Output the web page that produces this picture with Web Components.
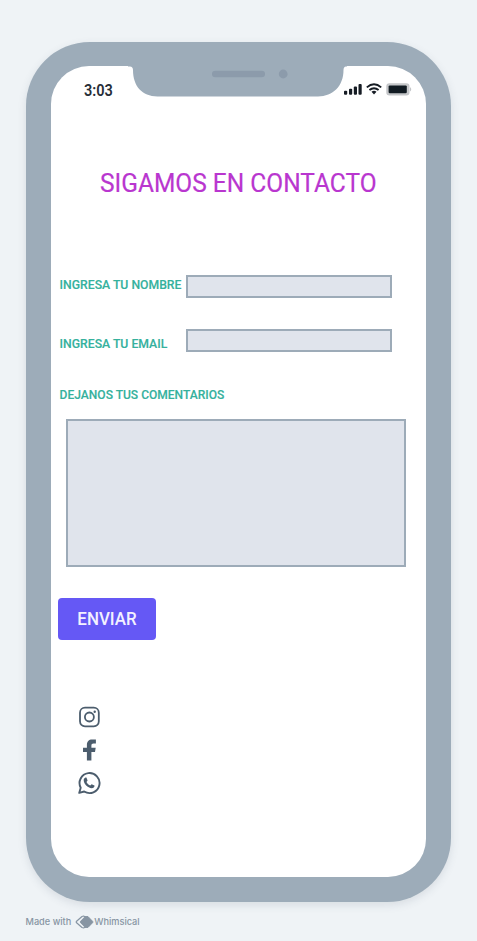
<!DOCTYPE html>
<html lang="es">
<head>
<meta charset="utf-8">
<title>Sigamos en contacto</title>
<style>
html,body{margin:0;height:100%}
body{background:#eff3f6;font-family:Roboto,"Liberation Sans",sans-serif;overflow:hidden}
</style>
</head>
<body>
<contact-board></contact-board>
<script>
const define = (name, html) => {
  const t = document.createElement('template');
  t.innerHTML = html;
  customElements.define(name, class extends HTMLElement {
    constructor() {
      super();
      this.attachShadow({mode: 'open'}).append(t.content.cloneNode(true));
    }
  });
};

define('status-bar', `
<style>
:host{display:flex;height:31px;align-items:flex-start}
.time{box-sizing:border-box;width:77px;padding:14.500px 0 0 32.500px;font-size:15px;line-height:20px;font-weight:600;color:#272e38;white-space:nowrap}
.time span{display:block;transform:scale(.97,1.04);transform-origin:0 50%}
svg{display:block;flex:none}
.icons{margin:15px 0 0 -4px}
</style>
<div class="time"><span>3:03</span></div>
<svg width="219" height="31" viewBox="0 0 219 31">
  <path fill="#9dacb9" d="M0 -1V.4H2Q4.900 .6 5 4C5 20 14 30.400 29.500 30.400H190C205 30.400 215.500 20 215.500 4Q215.600 .6 218 .4H219V-1Z"/>
  <rect x="84" y="4.700" width="53" height="6.600" rx="3.300" fill="#8c9bab"/>
  <circle cx="155.200" cy="8" r="4.400" fill="#8c9bab"/>
</svg>
<svg class="icons" width="72" height="16" viewBox="0 0 72 16">
  <g fill="#161c24">
    <rect x="1" y="9.700" width="3.200" height="4" rx="1"/>
    <rect x="6" y="7.700" width="3.200" height="6" rx="1"/>
    <rect x="10.800" y="5.400" width="3.200" height="8.300" rx="1"/>
    <rect x="15.500" y="3" width="3.200" height="10.700" rx="1"/>
  </g>
  <g fill="none" stroke="#161c24" stroke-width="1.900">
    <path d="M23.800 6.400Q31 .2 38.200 6.400"/>
    <path d="M26.400 9.100Q31 5.300 35.600 9.100"/>
  </g>
  <path d="M28.500 10.800Q31 8.800 33.500 10.800L31 13.400Z" fill="#161c24"/>
  <rect x="44" y="2.900" width="21.800" height="10.800" rx="2.500" fill="#c9cbcd" stroke="#c3c5c8" stroke-width="1.400"/>
  <path d="M67 5.900Q69.500 8.200 67 10.400Z" fill="#c3c5c8"/>
  <rect x="45.600" y="4.400" width="18.200" height="7.800" rx="1.200" fill="#111b22"/>
</svg>`);

define('page-title', `
<style>
:host{display:block;width:280px;height:32px;line-height:32px;font-size:26.400px;color:#b936cf;-webkit-text-stroke:.2px #b936cf;white-space:nowrap;transform:scaleX(.929);transform-origin:0 50%}
</style><slot></slot>`);

define('form-label', `
<style>
:host{display:block;width:126px;height:16px;line-height:16px;font-size:13px;font-weight:500;color:#35b19d;-webkit-text-stroke:.15px #35b19d;white-space:nowrap;transform:translateX(.6px) scaleX(var(--fit,.94));transform-origin:0 50%}
</style><slot></slot>`);

define('form-box', `
<style>
:host{display:block;box-sizing:border-box;flex:none;background:#e0e4ec;border:2px solid #9dabb8}
</style>`);

define('send-button', `
<style>
:host{display:block}
button{display:block;width:98px;height:42px;padding:0;border:0;border-radius:4px;background:#6558f5;color:#f3f1ff;font:500 18px/42px Roboto,"Liberation Sans",sans-serif;text-align:center}
span{display:block;transform:scaleX(.94)}
</style><button type="button"><span><slot></slot></span></button>`);

define('social-links', `
<style>
:host{display:flex;flex-direction:column;gap:9px;width:24px;color:#4c5d6d}
svg{display:block;width:24px;height:24px}
</style>
<svg viewBox="0 0 24 24" fill="none" stroke="currentColor" stroke-width="1.800">
  <rect x="3" y="2.700" width="18.800" height="18.600" rx="5"/>
  <circle cx="12.400" cy="12" r="4.500"/>
  <circle cx="17.700" cy="6.700" r="1.200" fill="currentColor" stroke="none"/>
</svg>
<svg viewBox="0 0 24 24" fill="currentColor">
  <path d="M9.900 22.500V13.900H6V9.800H9.900V7.200C9.900 3.600 11.800 1.600 15.200 1.600H18.900V5.600H16.600C15 5.600 14.400 6.300 14.400 7.700V9.800H18.700L18 13.900H14.400V22.500Z"/>
</svg>
<svg viewBox="0 0 24 24">
  <path d="M2.200 21.900L3.700 16.700A10 10 0 1 1 7.200 20.500Z" fill="none" stroke="currentColor" stroke-width="1.900" stroke-linejoin="round"/>
  <path d="M8.500 6.500H9.400L10.600 9.400L9.500 11C10.500 12.900 11.600 13.800 13.300 14.500L14.600 13.200L17.500 14.500C17.600 16.300 16.300 17.200 14.700 17.200C10.700 16.800 6.700 12.700 6.700 9.200C6.700 7.900 7.500 6.900 8.500 6.500Z" fill="currentColor"/>
</svg>`);

define('contact-form', `
<style>
:host{display:block}
.row{display:flex;justify-content:space-between;width:333px}
.field{width:206px;height:23px}
</style>
<div class="row" style="height:54px"><form-label style="margin-top:2px">INGRESA TU NOMBRE</form-label><form-box class="field"></form-box></div>
<div class="row" style="height:58px"><form-label style="margin-top:6.500px">INGRESA TU EMAIL</form-label><form-box class="field"></form-box></div>
<form-label style="--fit:.926">DEJANOS TUS COMENTARIOS</form-label>
<form-box style="width:340px;height:148px;margin:16px 0 31px 7px"></form-box>
<send-button style="margin-left:-1px">ENVIAR</send-button>`);

define('phone-frame', `
<style>
:host{display:block;box-sizing:border-box;width:425px;height:860px;padding:24px 25px;border-radius:64px;background:#9dacb9;box-shadow:0 3px 8px rgba(60,80,100,.13)}
.screen{box-sizing:border-box;width:375px;height:811px;border-radius:38px;background:#fff;overflow:hidden}
</style>
<div class="screen"><slot></slot></div>`);

define('made-with', `
<style>
:host{display:flex;align-items:center;height:16px;font:500 9.200px/16px Inter,sans-serif;color:#8795a3;white-space:nowrap}
svg{display:block;margin:0 0 0 4px}
</style>
<span>Made with</span>
<svg width="19" height="14" viewBox="0 0 19 14">
  <path d="M11 2.200L8.600 1L7 1.500L1.300 6.500V7.500L7 12.500L8.600 13L11 11.800" fill="none" stroke="currentColor" stroke-width="1.200" stroke-linejoin="round"/>
  <path d="M10.200 1.600H13L17.700 6.400V7.600L13 12.400H10.200L5.500 7.600V6.400Z" fill="currentColor" stroke="currentColor" stroke-width="1" stroke-linejoin="round"/>
</svg>
<span>Whimsical</span>`);

define('contact-board', `
<style>
:host{display:block;box-sizing:border-box;height:941px;padding:42px 0 0 26px}
</style>
<phone-frame>
  <status-bar></status-bar>
  <page-title style="margin:70px 0 76px 48.500px">SIGAMOS EN CONTACTO</page-title>
  <contact-form style="margin-left:8px"></contact-form>
  <social-links style="margin:64.500px 0 0 26px"></social-links>
</phone-frame>
<made-with style="margin:12px 0 0 -.5px"></made-with>`);
</script>
</body>
</html>
